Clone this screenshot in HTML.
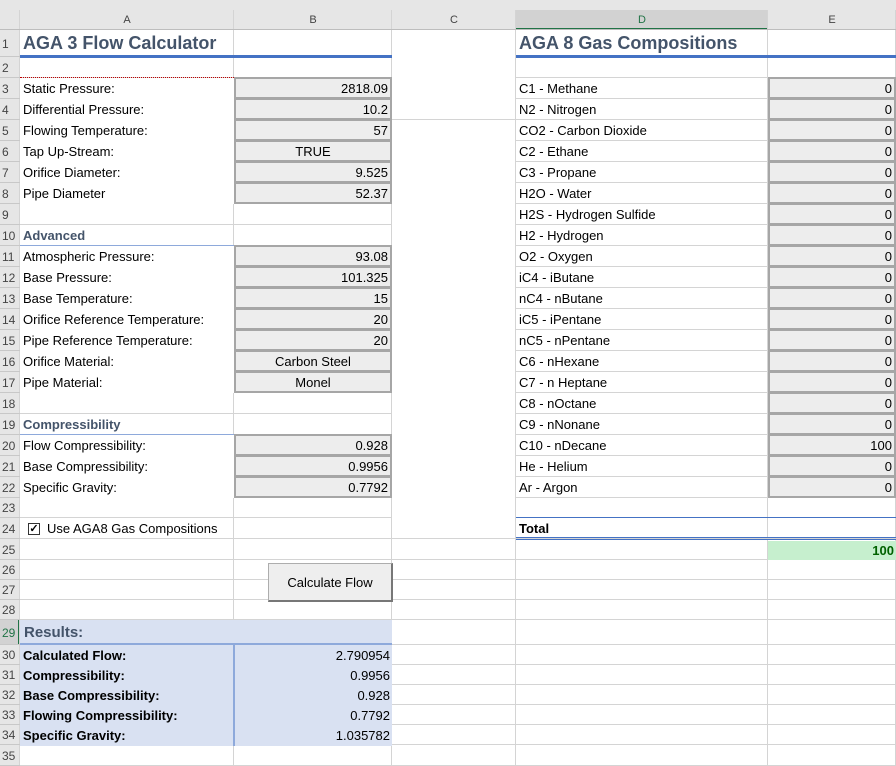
<!DOCTYPE html>
<html><head><meta charset="utf-8"><style>
body{margin:0;width:896px;height:766px;position:relative;overflow:hidden;background:#fff;font-family:"Liberation Sans",sans-serif;font-size:13px;color:#000}
div{position:absolute;box-sizing:border-box;white-space:nowrap}
.t{line-height:1;display:flex;align-items:center}
</style></head><body>
<script>
const tops=[0,30,57,78,99,120,141,162,183,204,225,246,267,288,309,330,351,372,393,414,435,456,477,498,518,539,560,580,600,620,645,665,685,705,725,745,766];
const cols=[20,234,392,516,768,896];
let h='';
function d(x,y,w,hh,st,txt){h+=`<div style="left:${x}px;top:${y}px;width:${w}px;height:${hh}px;${st}">${txt||''}</div>`;}
// header bg
d(0,0,896,30,'background:#e6e6e6');
d(0,0,20,766,'background:#e6e6e6');
d(516,10,252,20,'background:#d2d2d2;border-bottom:2px solid #217346');
d(0,620,20,25,'background:#d2d2d2;border-right:2px solid #217346');
// vertical gridlines
for(let i=0;i<cols.length;i++){d(cols[i]-1,10,1,756,'background:#d4d4d4');}
// col headers
const names=['A','B','C','D','E'];
for(let i=0;i<5;i++){d(cols[i],10,cols[i+1]-cols[i],20,'font-size:11px;color:'+(i==3?'#217346':'#444')+';display:flex;align-items:center;justify-content:center',names[i]);}
d(0,29,896,1,'background:#bdbdbd');
// row lines & numbers
for(let r=1;r<=35;r++){
 const y=tops[r+1]-1;
 d(0,y,20,1,'background:#c8c8c8');
 if(r<=23) {d(20,y,372,1,'background:#d4d4d4');d(516,y,380,1,'background:#d4d4d4');}
 else d(20,y,876,1,'background:#d4d4d4');
 d(0,tops[r],20,tops[r+1]-tops[r],'font-size:12px;color:'+(r==29?'#217346':'#444')+';display:flex;align-items:center;padding-left:2px',r);
}
d(392,119,124,1,'background:#d4d4d4');
// white-out C in rows 1-2 area handled
// titles
d(20,30,372,27,'font-size:18px;font-weight:bold;color:#44546a;display:flex;align-items:center;padding-left:3px','AGA 3 Flow Calculator');
d(516,30,252,27,'font-size:18px;font-weight:bold;color:#44546a;display:flex;align-items:center;padding-left:3px','AGA 8 Gas Compositions');
d(20,55,372,3,'background:#4472c4');d(516,55,380,3,'background:#4472c4');
d(20,77,214,1,'border-top:1px dotted #c00000');
function row(r,label,val,ctr,st){
 const y=tops[r],hh=tops[r+1]-tops[r];
 d(20,y,214,hh,'background:#fff;display:flex;align-items:center;padding-left:3px;'+(st||''),label);
 if(val!==undefined) d(234,y-1,158,hh+1,'background:#ededed;border:2px solid #a6a6a6;display:flex;align-items:center;padding:0 2px;justify-content:'+(ctr?'center':'flex-end'),val);
}
row(3,'Static Pressure:','2818.09');row(4,'Differential Pressure:','10.2');row(5,'Flowing Temperature:','57');
row(6,'Tap Up-Stream:','TRUE',1);row(7,'Orifice Diameter:','9.525');row(8,'Pipe Diameter','52.37');
d(20,tops[10],214,21,'font-weight:bold;color:#44546a;display:flex;align-items:center;padding-left:3px','Advanced');
d(20,245,214,2,'background:#8ea9db');
row(11,'Atmospheric Pressure:','93.08');row(12,'Base Pressure:','101.325');row(13,'Base Temperature:','15');
row(14,'Orifice Reference Temperature:','20');row(15,'Pipe Reference Temperature:','20');
row(16,'Orifice Material:','Carbon Steel',1);row(17,'Pipe Material:','Monel',1);
d(20,tops[19],214,21,'font-weight:bold;color:#44546a;display:flex;align-items:center;padding-left:3px','Compressibility');
d(20,434,214,2,'background:#8ea9db');
row(20,'Flow Compressibility:','0.928');row(21,'Base Compressibility:','0.9956');row(22,'Specific Gravity:','0.7792');
// checkbox
d(28,523,12,12,'border:1px solid #333;background:#fff;font-size:11px;line-height:10px;text-align:center;font-weight:bold','✓');
d(47,518,200,21,'display:flex;align-items:center','Use AGA8 Gas Compositions');
// button
d(268,563,125,39,'background:#eeeeee;border:1px solid #adadad;border-right:2px solid #777;border-bottom:2px solid #777;display:flex;align-items:center;justify-content:center','Calculate Flow');
// results
d(20,620,372,126,'background:#d9e1f2');
d(20,620,372,25,'font-size:15px;font-weight:bold;color:#44546a;display:flex;align-items:center;padding-left:4px','Results:');
d(20,643,372,2,'background:#8ea9db');
d(233,645,2,101,'background:#8ea9db');
const res=[['Calculated Flow:','2.790954'],['Compressibility:','0.9956'],['Base Compressibility:','0.928'],['Flowing Compressibility:','0.7792'],['Specific Gravity:','1.035782']];
res.forEach((v,i)=>{const y=tops[30+i];
 d(20,y,214,20,'font-weight:bold;display:flex;align-items:center;padding-left:3px',v[0]);
 d(234,y,158,20,'display:flex;align-items:center;justify-content:flex-end;padding-right:2px',v[1]);});
// gas compositions
const gas=['C1 - Methane','N2 - Nitrogen','CO2 - Carbon Dioxide','C2 - Ethane','C3 - Propane','H2O - Water','H2S - Hydrogen Sulfide','H2 - Hydrogen','O2 - Oxygen','iC4 - iButane','nC4 - nButane','iC5 - iPentane','nC5 - nPentane','C6 - nHexane','C7 - n Heptane','C8 - nOctane','C9 - nNonane','C10 - nDecane','He - Helium','Ar - Argon'];
gas.forEach((g,i)=>{const r=3+i,y=tops[r],hh=tops[r+1]-tops[r];
 d(516,y,252,hh,'display:flex;align-items:center;padding-left:3px',g);
 d(768,y-1,128,hh+1,'background:#ededed;border:2px solid #a6a6a6;display:flex;align-items:center;justify-content:flex-end;padding-right:2px',g.startsWith('C10')?'100':'0');});
d(516,517,380,1,'background:#4472c4');
d(516,518,252,21,'font-weight:bold;display:flex;align-items:center;padding-left:3px','Total');
d(516,537,380,1,'background:#4472c4');d(516,539,380,1,'background:#4472c4');
d(768,541,128,19,'background:#c6efce;color:#006100;font-weight:bold;display:flex;align-items:center;justify-content:flex-end;padding-right:2px','100');
document.body.innerHTML+=h;
</script>
</body></html>
